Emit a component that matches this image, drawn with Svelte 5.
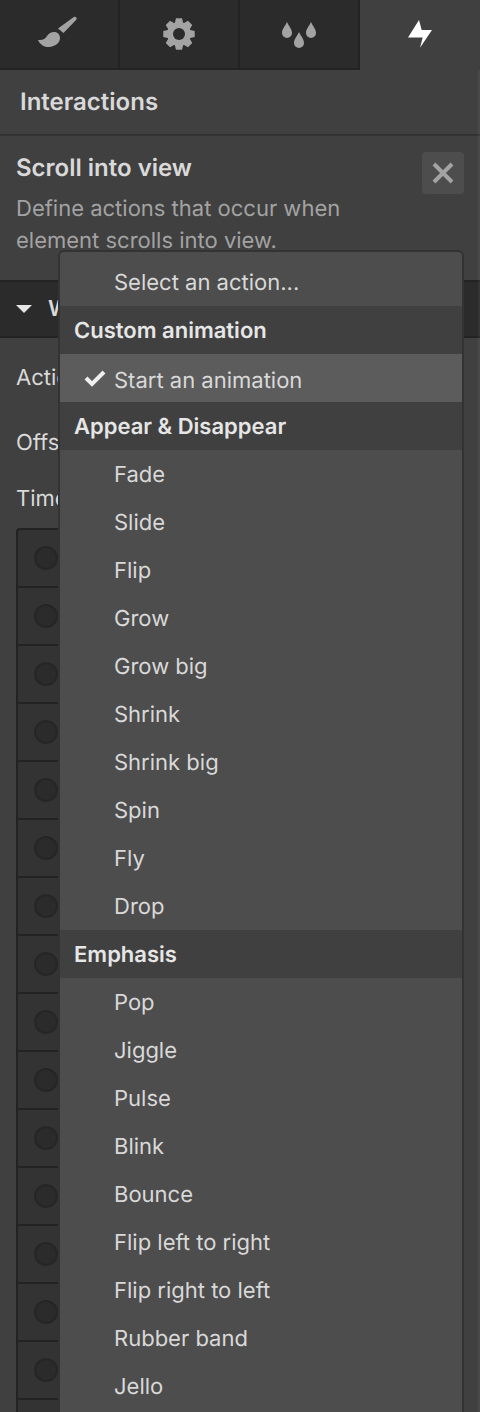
<script>
  const rows = Array.from({ length: 16 });
  const groups = [
    { items: [{ label: 'Select an action...', cls: 'first' }] },
    { title: 'Custom animation', items: [{ label: 'Start an animation', cls: 'sel' }] },
    { title: 'Appear & Disappear', items: ['Fade','Slide','Flip','Grow','Grow big','Shrink','Shrink big','Spin','Fly','Drop'].map((label) => ({ label })) },
    { title: 'Emphasis', items: ['Pop','Jiggle','Pulse','Blink','Bounce','Flip left to right','Flip right to left','Rubber band','Jello'].map((label) => ({ label })) }
  ];

  const polar = (r, deg) => {
    const a = (deg * Math.PI) / 180;
    return `${(17 + r * Math.cos(a)).toFixed(2)} ${(17 + r * Math.sin(a)).toFixed(2)}`;
  };
  const gear = Array.from({ length: 8 }, (_, i) => {
    const c = i * 45 - 90;
    return `${i ? 'L' : 'M'}${polar(12, c - 20)} L${polar(16, c - 11)} L${polar(16, c + 11)} L${polar(12, c + 20)}`;
  }).join(' ') + ' Z';
</script>

<div class="panel">
  <nav class="tabs">
    <div class="tab">
      <svg width="42" height="36" viewBox="0 0 42 36"><g fill="#a3a3a3"><path d="M35.500 1.200C37 0 39.500 1.800 38.500 3.500L25.500 17 20 12.500z"/><path d="M0 24C5 24.500 7 23 9 20 11 17 14 15.500 17 16 20 16.500 22 19 22 22 22 27 17 30.500 11 31 6 31.300 2 28.500 0 24z"/></g></svg>
    </div>
    <div class="tab">
      <svg width="34" height="34" viewBox="0 0 34 34"><path fill="#a3a3a3" d={gear}/><circle cx="17" cy="17" r="6" fill="#2b2b2b"/></svg>
    </div>
    <div class="tab">
      <svg width="34" height="28" viewBox="0 0 34 28"><g fill="#a3a3a3"><path d="M5 2C6.500 5.500 10 9 10 13A5 5 0 0 1 0 13C0 9 3.500 5.500 5 2z"/><path d="M29 2C30.500 5.500 34 9 34 13A5 5 0 0 1 24 13C24 9 27.500 5.500 29 2z"/><path d="M17 12C18.500 15.500 22 19 22 23A5 5 0 0 1 12 23C12 19 15.500 15.500 17 12z"/></g></svg>
    </div>
    <div class="tab active">
      <svg width="24" height="28" viewBox="0 0 24 28"><path fill="#fff" d="M11 0L13.700 10H24L12 27.700 14.700 17.500H0z"/></svg>
    </div>
  </nav>

  <header class="head">Interactions</header>

  <section class="intro">
    <div class="intro-text">
      <h2>Scroll into view</h2>
      <p>Define actions that occur when<br />element scrolls into view.</p>
    </div>
    <button class="close" aria-label="Close">
      <svg width="22" height="22" viewBox="0 0 22 22"><path d="M2 2l18 18M20 2L2 20" stroke="#a3a3a3" stroke-width="4" fill="none"/></svg>
    </button>
  </section>

  <div class="section-bar"><span class="caret"></span><span>When</span></div>

  <div class="field action">Action</div>
  <div class="field offset">Offset</div>
  <div class="field time">Timeline</div>

  <div class="timeline">
    {#each rows as _}
      <div class="row"><span class="dot"></span></div>
    {/each}
  </div>
  <div class="edge"></div>
</div>

<div class="menu">
  {#each groups as g}
    {#if g.title}<div class="group">{g.title}</div>{/if}
    {#each g.items as it}
      <div class="item {it.cls ?? ''}">
        {#if it.cls === 'sel'}
          <svg class="check" width="22" height="18" viewBox="0 0 22 18"><path d="M2 9l6 6L20 3" fill="none" stroke="#f0f0f0" stroke-width="4"/></svg>
        {/if}
        {it.label}
      </div>
    {/each}
  {/each}
</div>

<style>
  :global(body) { margin: 0; background: #404040; }
  :global(#app) { position: relative; width: 480px; height: 1412px; overflow: hidden; font-family: Inter, "Liberation Sans", sans-serif; text-rendering: geometricPrecision; }
  .panel { position: relative; width: 480px; height: 1412px; background: #404040; color: #d9d9d9; font-size: 22px; overflow: hidden; }
  .edge { position: absolute; top: 70px; right: 0; bottom: 0; width: 2px; background: rgba(255, 255, 255, 0.05); }
  .tabs { display: flex; height: 70px; }
  .tab { width: 120px; box-sizing: border-box; background: #2b2b2b; border-right: 2px solid #232323; border-bottom: 2px solid #232323; display: flex; align-items: center; justify-content: center; }
  .tab.active { background: #404040; border: 0; padding-bottom: 2px; }
  .head { height: 66px; box-sizing: border-box; padding: 0 20px 2px; display: flex; align-items: center; font-size: 24px; font-weight: 600; color: #d9d9d9; border-bottom: 2px solid #333; }
  .intro { height: 144px; box-sizing: border-box; padding: 16px 16px 0; display: flex; justify-content: space-between; }
  h2 { margin: 0; font-size: 24px; line-height: 32px; font-weight: 600; color: #d9d9d9; }
  p { margin: 9px 0 0; font-size: 22px; line-height: 32px; color: #a3a3a3; }
  .close { width: 42px; height: 42px; padding: 0; border: 0; border-radius: 4px; background: #4d4d4d; display: flex; align-items: center; justify-content: center; }
  .section-bar { height: 58px; background: #2b2b2b; border-top: 2px solid #232323; border-bottom: 2px solid #232323; display: flex; align-items: center; gap: 16px; padding-left: 16px; box-sizing: border-box; font-weight: 600; }
  .caret { width: 0; height: 0; border-left: 8px solid transparent; border-right: 8px solid transparent; border-top: 8px solid #e6e6e6; }
  .field { padding-left: 16px; line-height: 32px; color: #d9d9d9; }
  .action { margin-top: 24px; }
  .offset { margin-top: 33px; }
  .time { margin-top: 24px; }
  .timeline { width: 420px; margin: 13px 0 0 16px; border-left: 2px solid #232323; border-top: 2px solid #232323; border-top-left-radius: 4px; background: #333; }
  .row { height: 56px; border-bottom: 2px solid #232323; display: flex; align-items: center; padding-left: 16px; }
  .dot { width: 24px; height: 24px; box-sizing: border-box; border-radius: 50%; background: #2b2b2b; border: 2px solid #262626; }
  .menu { position: absolute; left: 58px; top: 250px; width: 406px; box-sizing: border-box; border: 2px solid #333; border-bottom: 0; border-radius: 6px 6px 0 0; background: #4d4d4d; color: #d9d9d9; font-size: 22px; padding-bottom: 48px; }
  .item { position: relative; height: 48px; line-height: 50px; padding-left: 54px; }
  .item.first { height: 54px; line-height: 62px; border-radius: 4px 4px 0 0; }
  .item.sel { background: #5c5c5c; line-height: 54px; }
  .check { position: absolute; left: 24px; top: 15px; }
  .group { height: 48px; line-height: 50px; background: #404040; padding-left: 14px; font-weight: 600; color: #e6e6e6; }
</style>
